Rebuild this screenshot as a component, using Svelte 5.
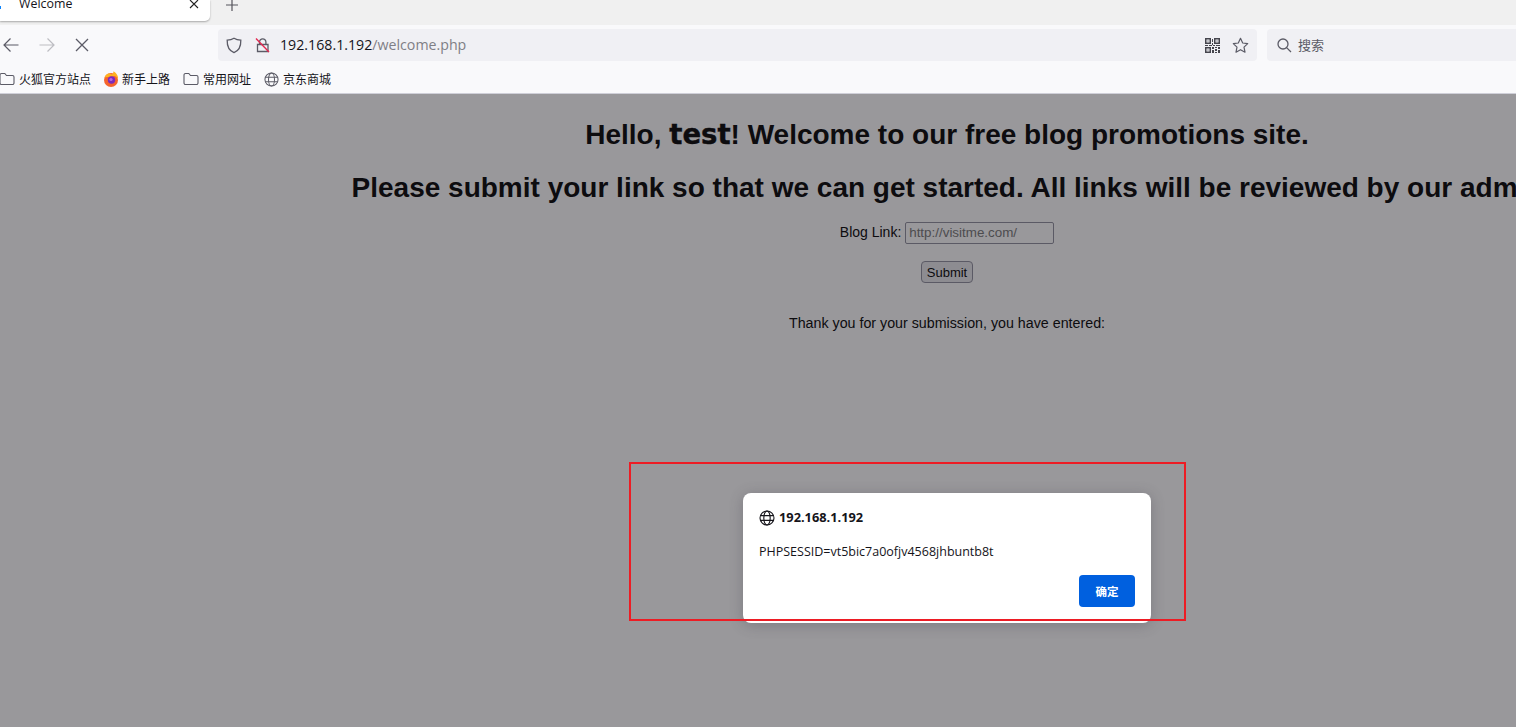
<script>
  const bookmarks = [
    { icon: 'folder', label: '火狐官方站点' },
    { icon: 'firefox', label: '新手上路' },
    { icon: 'folder', label: '常用网址' },
    { icon: 'globe', label: '京东商城' }
  ];
</script>

{#snippet globe(size)}
  <svg width={size} height={size} viewBox="0 0 16 16" fill="none" stroke="currentColor" stroke-width="1.1">
    <circle cx="8" cy="8" r="7" />
    <ellipse cx="8" cy="8" rx="3.2" ry="7" />
    <path d="M1.3 5.6h13.4M1.3 10.4h13.4" />
  </svg>
{/snippet}

<div class="browser">
  <div class="tabstrip">
    <div class="tab">
      <span class="throbber"></span>
      <span class="tab-title">Welcome</span>
      <svg class="tab-close" width="10" height="10" viewBox="0 0 10 10" stroke="#222" stroke-width="1.1"><path d="M1 1l8 8M9 1l-8 8" /></svg>
    </div>
    <svg class="new-tab" width="14" height="14" viewBox="0 0 14 14" stroke="#55545c" stroke-width="1.2"><path d="M7 1v12M1 7h12" /></svg>
  </div>

  <div class="toolbar">
    <div class="nav">
      <svg width="18" height="18" viewBox="0 0 18 18" fill="none" stroke="#5b5b66" stroke-width="1.2"><path d="M16.5 9H2M8.5 2.5L2 9l6.5 6.5" /></svg>
      <svg width="18" height="18" viewBox="0 0 18 18" fill="none" stroke="#bdbdc2" stroke-width="1.2"><path d="M1.5 9H16M9.5 2.5L16 9l-6.5 6.5" /></svg>
      <svg class="stop" width="14" height="14" viewBox="0 0 14 14" fill="none" stroke="#5b5b66" stroke-width="1.3"><path d="M1 1l12 12M13 1L1 13" /></svg>
    </div>
    <div class="urlbar">
      <svg width="16" height="17" viewBox="0 0 16 17" fill="none" stroke="#5b5b66" stroke-width="1.3"><path d="M8 1.2c2 1.3 4.4 1.9 6.8 2 .2 5.6-1.8 10.4-6.8 12.4C3 13.6 1 8.8 1.2 3.2c2.4-.1 4.8-.7 6.8-2z" /></svg>
      <svg class="lock" width="15" height="16" viewBox="0 0 15 16" fill="none"><path d="M4.5 7V5a3.2 3.2 0 0 1 6.4 0v2M2.5 7.5h10.5v7H2.5z" stroke="#5b5b66" stroke-width="1.3" /><path d="M1 1.5l13 13.5" stroke="#e22850" stroke-width="1.4" /></svg>
      <span class="url"><span class="host">192.168.1.192</span><span class="path">/welcome.php</span></span>
      <svg class="qr" width="15" height="15" viewBox="0 0 15 15" fill="#45454d"><path fill-rule="evenodd" d="M0 0h6v6H0zM1.5 1.5v3h3v-3zM9 0h6v6H9zM10.5 1.5v3h3v-3zM0 9h6v6H0zM1.5 10.5v3h3v-3z" /><path d="M2.5 2.5h1v1h-1zM11.5 2.5h1v1h-1zM2.5 11.5h1v1h-1zM7 1h1v3H7zM7 5h1v2H7zM0 7h3v1H0zM4 7h3v1H4zM8 7h2v1H8zM11 7h4v1h-4zM7 9h2v2H7zM10 9h2v1h-2zM13 9h2v2h-2zM10 11h2v2h-2zM7 12h2v3H7zM13 12h2v3h-2zM10 14h2v1h-2z" /></svg>
      <svg class="star" width="17" height="17" viewBox="0 0 17 17" fill="none" stroke="#5b5b66" stroke-width="1.2"><path d="M8.5 1.3l2.2 4.7 5 .6-3.700 3.500 1 5.100-4.500-2.500-4.500 2.500 1-5.100L1.300 6.600l5-.6z" stroke-linejoin="round" /></svg>
    </div>
    <div class="searchbar">
      <svg width="15" height="15" viewBox="0 0 15 15" fill="none" stroke="#5b5b66" stroke-width="1.3"><circle cx="6" cy="6" r="5" /><path d="M9.6 9.6L14 14" /></svg>
      <span>搜索</span>
    </div>
  </div>

  <div class="bookmarks">
    {#each bookmarks as item}
      <div class="bookmark">
        {#if item.icon === 'folder'}
          <svg class="folder" width="16" height="14" viewBox="0 0 16 14" fill="none" stroke="#5b5b66" stroke-width="1.1"><path d="M1 3a1.500 1.500 0 0 1 1.500-1.500h3.300l1.700 2h6a1.500 1.500 0 0 1 1.500 1.500v6a1.500 1.500 0 0 1-1.500 1.500h-11A1.500 1.500 0 0 1 1 11z" /></svg>
        {:else if item.icon === 'firefox'}
          <svg class="fox" width="16" height="16" viewBox="0 0 16 16"><circle cx="8" cy="9" r="7" fill="#f5642d" /><path d="M1.500 6.500C3 2 7 1.500 9 3.500c1-1 1.500-2 1.500-3.200 3 2 5 4.500 4.500 8.200-.5-2-2-3.200-3.500-3.600z" fill="#ffb21f" /><circle cx="8.500" cy="9" r="3.700" fill="#7b2bbd" /><circle cx="8" cy="8.500" r="1.600" fill="#b968e0" /></svg>
        {:else}
          <span class="bookmark-globe">{@render globe(15)}</span>
        {/if}
        <span>{item.label}</span>
      </div>
    {/each}
  </div>

  <main class="viewport">
    <div class="page">
      <h2>Hello, <b class="name">test</b>! Welcome to our free blog promotions site.</h2>
      <h2>Please submit your link so that we can get started. All links will be reviewed by our admin</h2>
      <form class="blog-form">
        <div class="field">
          <label for="blog">Blog Link:</label>
          <input id="blog" placeholder="http://visitme.com/" />
        </div>
        <button type="button">Submit</button>
      </form>
      <p class="thanks">Thank you for your submission, you have entered:</p>
    </div>

    <div class="dim"></div>

    <div class="dialog">
      <div class="dialog-title">
        {@render globe(16)}
        <span>192.168.1.192</span>
      </div>
      <p class="dialog-text">PHPSESSID=vt5bic7a0ofjv4568jhbuntb8t</p>
      <div class="dialog-actions">
        <button type="button" class="ok">确定</button>
      </div>
    </div>

    <div class="highlight"></div>
  </main>
</div>

<style>
  :global(body) {
    margin: 0;
    overflow: hidden;
  }

  .browser {
    display: flex;
    flex-direction: column;
    height: 727px;
    font-family: "Open Sans", "Noto Sans CJK SC", sans-serif;
    color: #15141a;
  }

  .tabstrip {
    display: flex;
    height: 25px;
    flex: none;
    background: #f0f0f0;
    align-items: flex-start;
  }

  .tab {
    display: flex;
    align-items: center;
    box-sizing: border-box;
    width: 210px;
    height: 21px;
    padding: 0 11px 13px 0;
    background: #fff;
    border-radius: 0 0 5px 0;
    box-shadow: 0 1px 2px rgba(0, 0, 0, 0.3);
    font-size: 12.4px;
  }

  .throbber {
    width: 1px;
    height: 3px;
    margin-top: 6px;
    background: #0a84ff;
  }

  .tab-title {
    margin-left: 18px;
    line-height: 8px;
    flex: 1;
  }

  .tab-close {
    margin-top: -1px;
  }

  .new-tab {
    margin: -2px 0 0 15px;
  }

  .toolbar {
    display: flex;
    align-items: center;
    height: 40px;
    flex: none;
    background: #f9f9fb;
  }

  .nav {
    display: flex;
    align-items: center;
    gap: 18px;
    width: 218px;
    padding-left: 2px;
    box-sizing: border-box;
  }

  .stop {
    margin-left: 1px;
  }

  .urlbar {
    display: flex;
    align-items: center;
    box-sizing: border-box;
    width: 1039px;
    height: 32px;
    padding: 0 8px;
    border-radius: 4px;
    background: #f0f0f4;
  }

  .lock {
    margin-left: 13px;
  }

  .url {
    flex: 1;
    margin-left: 10px;
    margin-top: -2px;
    font-size: 14.2px;
  }

  .path {
    color: #7f7f86;
  }

  .qr {
    margin-left: 1px;
  }

  .star {
    margin-left: 12px;
  }

  .searchbar {
    display: flex;
    align-items: center;
    gap: 6px;
    box-sizing: border-box;
    flex: 1;
    height: 32px;
    margin-left: 10px;
    padding-left: 10px;
    border-radius: 4px 0 0 4px;
    background: #f0f0f4;
    color: #5b5b66;
    font-size: 13px;
  }

  .searchbar span {
    margin-top: -2px;
  }

  .bookmarks {
    display: flex;
    align-items: center;
    gap: 13px;
    box-sizing: border-box;
    height: 29px;
    flex: none;
    background: #f9f9fb;
    border-bottom: 1px solid #cfcfd8;
    font-size: 12px;
  }

  .bookmark {
    display: flex;
    align-items: center;
    gap: 4px;
  }

  .bookmark:first-child {
    margin-left: -1px;
  }

  .fox {
    margin: 0 -1px 0 -1px;
  }

  .bookmark-globe {
    display: flex;
    color: #5b5b66;
  }

  .viewport {
    position: relative;
    flex: 1;
    overflow: hidden;
    background: #fff;
  }

  .page {
    width: 1894px;
    font-family: "Liberation Sans", Arial, sans-serif;
    font-size: 14px;
    color: #000;
    text-align: center;
    white-space: nowrap;
  }

  h2 {
    margin: 0 0 23px;
    padding-top: 25px;
    font-size: 28px;
    line-height: 30px;
  }

  h2 + h2 {
    padding-top: 0;
    margin-bottom: 18px;
  }

  .name {
    font-family: "DejaVu Sans", Verdana, sans-serif;
    font-size: 27.5px;
    font-weight: 700;
    -webkit-text-stroke: 0.4px #000;
  }

  .field {
    height: 22px;
    line-height: 22px;
  }

  input {
    box-sizing: border-box;
    width: 149px;
    height: 22px;
    padding: 1px 3px;
    border: 1px solid #8f8f9d;
    border-radius: 2px;
    font-family: "Liberation Sans", Arial, sans-serif;
    font-size: 13.4px;
    background: #fff;
  }

  input::placeholder {
    color: #757575;
  }

  .blog-form button {
    display: block;
    margin: 18px auto 0;
    width: 52px;
    height: 22px;
    padding: 0;
    border: 1px solid #8f8f9d;
    border-radius: 4px;
    background: #e9e9ed;
    font-family: "Liberation Sans", Arial, sans-serif;
    font-size: 13px;
    color: #000;
  }

  .thanks {
    margin: 32px 0 0;
    font-size: 14.25px;
    line-height: 16px;
  }

  .dim {
    position: absolute;
    inset: 0;
    background: rgba(28, 27, 34, 0.45);
  }

  .dialog {
    position: absolute;
    left: 743px;
    top: 399px;
    box-sizing: border-box;
    width: 408px;
    height: 130px;
    padding: 16px;
    border-radius: 8px;
    background: #fff;
    box-shadow: 0 2px 14px rgba(58, 57, 68, 0.3);
    font-family: "Open Sans", "Noto Sans CJK SC", sans-serif;
    font-size: 12.5px;
    color: #15141a;
  }

  .dialog-title {
    display: flex;
    align-items: center;
    gap: 4px;
    height: 17px;
    font-size: 12.8px;
    font-weight: 700;
  }

  .dialog-title span {
    margin-top: -2px;
  }

  .dialog-text {
    margin: 17px 0 0;
    line-height: 17px;
  }

  .dialog-actions {
    display: flex;
    justify-content: flex-end;
    margin-top: 15px;
  }

  .ok {
    width: 56px;
    height: 32px;
    padding: 0;
    border: 0;
    border-radius: 4px;
    background: #0060df;
    color: #fff;
    font-family: "Open Sans", "Noto Sans CJK SC", sans-serif;
    font-size: 11.5px;
    font-weight: 700;
  }

  .highlight {
    position: absolute;
    left: 629px;
    top: 368px;
    box-sizing: border-box;
    width: 557px;
    height: 159px;
    border: 2px solid #ed1c24;
  }
</style>
